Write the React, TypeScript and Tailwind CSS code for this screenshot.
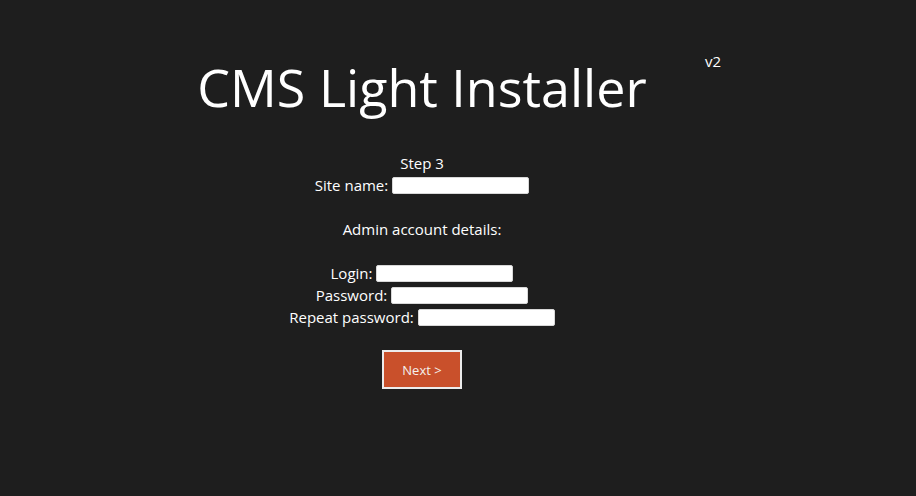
const FIELDS = [
  { id: "login", label: "Login:" },
  { id: "password", label: "Password:", type: "password" },
  { id: "repeat", label: "Repeat password:", type: "password" },
];

function Field({ label, type = "text" }: { label: string; type?: string }) {
  return (
    <div className="flex h-[22px] items-center justify-center gap-1">
      <span>{label}</span>
      <input
        type={type}
        className="h-[17px] w-[137px] rounded-[2px] border border-[#d8d8d8] bg-white outline-none"
      />
    </div>
  );
}

export default function App() {
  return (
    <div
      className="relative min-h-[496px] w-full bg-[#1e1e1e] pr-[72px] text-center text-[15px] leading-[22px] text-white"
      style={{ fontFamily: '"Open Sans", "Noto Sans", sans-serif' }}
    >
      <span className="absolute left-[705px] top-[51px] text-[15px] leading-[20px]">v2</span>

      <h1 className="pt-[51px] text-[52px] leading-[72px] font-normal">CMS Light Installer</h1>

      <div className="mt-[29px] flex flex-col">
        <div className="h-[22px]">Step 3</div>
        <Field label="Site name:" />
        <div className="h-[22px]" />
        <div className="h-[22px]">Admin account details:</div>
        <div className="h-[22px]" />
        {FIELDS.map((f) => (
          <Field key={f.id} label={f.label} type={f.type} />
        ))}
      </div>

      <div className="mt-[22px] flex justify-center">
        <button className="h-[39px] w-[80px] border-2 border-[#ececec] bg-[#c9502b] text-[13px] text-[#f4f0ee]">
          Next &gt;
        </button>
      </div>
    </div>
  );
}
